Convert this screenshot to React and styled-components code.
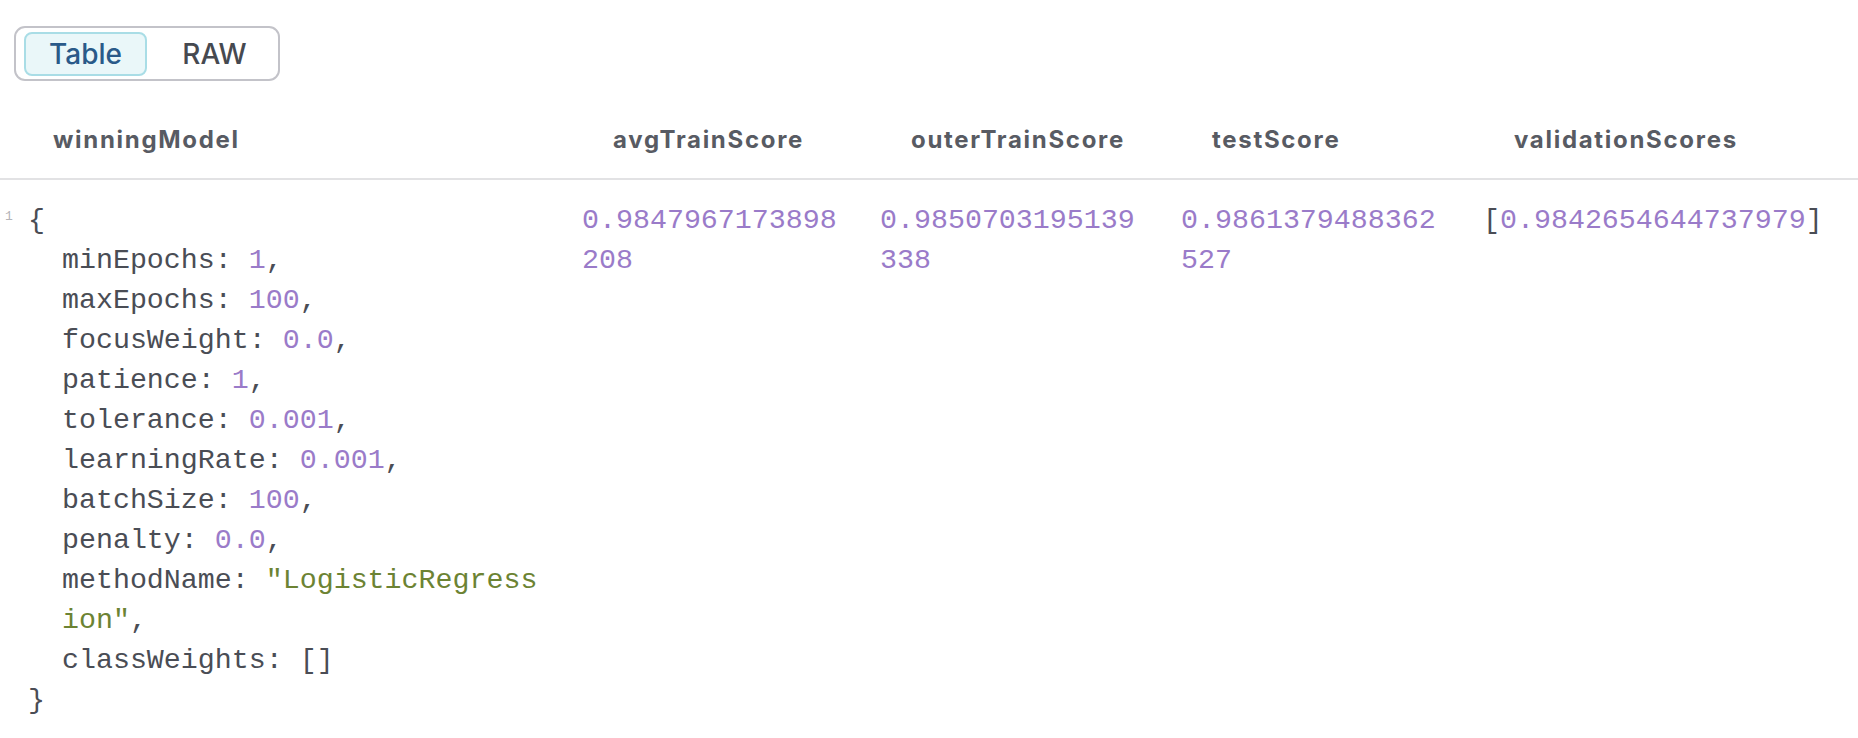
import React, { useState } from "react";
import styled, { createGlobalStyle, css } from "styled-components";

const COLOR = {
  text: "#4a4d55",
  header: "#585b63",
  number: "#9a7bc9",
  string: "#6c8333",
  gutter: "#b4b4b8",
  divider: "#e2e2e4",
};

const MONO = `"Liberation Mono", "DejaVu Sans Mono", monospace`;
const SANS = `Inter, "Noto Sans", Roboto, sans-serif`;

const GlobalStyle = createGlobalStyle`
  html, body {
    margin: 0;
    padding: 0;
    background: #ffffff;
  }
  body {
    font-family: ${SANS};
    color: ${COLOR.text};
  }
`;

const COLUMNS = [
  { key: "winningModel", title: "winningModel" },
  { key: "avgTrainScore", title: "avgTrainScore", value: "0.9847967173898208" },
  { key: "outerTrainScore", title: "outerTrainScore", value: "0.9850703195139338" },
  { key: "testScore", title: "testScore", value: "0.9861379488362527" },
  { key: "validationScores", title: "validationScores", list: ["0.9842654644737979"] },
];

const MODEL = [
  { key: "minEpochs", type: "number", value: "1" },
  { key: "maxEpochs", type: "number", value: "100" },
  { key: "focusWeight", type: "number", value: "0.0" },
  { key: "patience", type: "number", value: "1" },
  { key: "tolerance", type: "number", value: "0.001" },
  { key: "learningRate", type: "number", value: "0.001" },
  { key: "batchSize", type: "number", value: "100" },
  { key: "penalty", type: "number", value: "0.0" },
  { key: "methodName", type: "string", value: '"LogisticRegression"' },
  { key: "classWeights", type: "plain", value: "[]" },
];

export default function App() {
  const [view, setView] = useState("table");

  return (
    <Page>
      <GlobalStyle />
      <Toolbar>
        <Segmented>
          <SegmentButton $active={view === "table"} onClick={() => setView("table")}>
            Table
          </SegmentButton>
          <SegmentButton $active={view === "raw"} onClick={() => setView("raw")}>
            RAW
          </SegmentButton>
        </Segmented>
      </Toolbar>

      <Grid>
        <HeaderRow>
          {COLUMNS.map((col, i) => (
            <HeaderCell key={col.key} $first={i === 0}>
              {col.title}
            </HeaderCell>
          ))}
        </HeaderRow>

        <BodyRow>
          <CodeCell>
            <Gutter>1</Gutter>
            <Code>
              <Line>{"{"}</Line>
              {MODEL.map((item, i) => (
                <Line key={item.key} $indent>
                  {item.key}: <Token $type={item.type}>{item.value}</Token>
                  {i < MODEL.length - 1 ? "," : ""}
                </Line>
              ))}
              <Line>{"}"}</Line>
            </Code>
          </CodeCell>

          {COLUMNS.slice(1).map((col) => (
            <DataCell key={col.key}>
              {col.list ? (
                <>
                  [
                  {col.list.map((v) => (
                    <Token key={v} $type="number">
                      {v}
                    </Token>
                  ))}
                  ]
                </>
              ) : (
                <Token $type="number">{col.value}</Token>
              )}
            </DataCell>
          ))}
        </BodyRow>
      </Grid>
    </Page>
  );
}

const Page = styled.div`
  width: 100%;
  min-height: 738px;
`;

const Toolbar = styled.div`
  display: flex;
  padding: 26px 0 0 14px;
`;

const Segmented = styled.div`
  display: flex;
  gap: 6px;
  padding: 4px 2px 3px 8px;
  border: 2px solid #c3c3c9;
  border-radius: 11px;
`;

const SegmentButton = styled.button`
  width: 123px;
  height: 44px;
  display: flex;
  align-items: center;
  justify-content: center;
  font-family: ${SANS};
  font-size: 28px;
  font-weight: 500;
  color: #464950;
  background: transparent;
  border: 2px solid transparent;
  border-radius: 8px;
  cursor: pointer;
  padding: 0;
  ${({ $active }) =>
    $active &&
    css`
      color: #2a5a89;
      background: #eaf7f9;
      border-color: #a9dde6;
    `}
`;

const TEMPLATE = "566px 298px 301px 302px 1fr";

const Grid = styled.div`
  margin-top: 19px;
`;

const HeaderRow = styled.div`
  display: grid;
  grid-template-columns: ${TEMPLATE};
  height: 78px;
  border-bottom: 2px solid ${COLOR.divider};
`;

const HeaderCell = styled.div`
  display: flex;
  align-items: center;
  padding-left: ${({ $first }) => ($first ? "53px" : "47px")};
  font-family: ${SANS};
  font-size: 24px;
  font-weight: 700;
  letter-spacing: 1.7px;
  color: ${COLOR.header};
  white-space: nowrap;
`;

const BodyRow = styled.div`
  display: grid;
  grid-template-columns: ${TEMPLATE};
  padding-top: 20px;
  font-family: ${MONO};
  font-size: 28.3px;
  line-height: 40px;
  color: ${COLOR.text};
`;

const CodeCell = styled.div`
  display: flex;
  padding-right: 20px;
`;

const Gutter = styled.div`
  flex: 0 0 28px;
  box-sizing: border-box;
  padding-left: 5px;
  font-family: ${MONO};
  font-size: 13px;
  line-height: 34px;
  color: ${COLOR.gutter};
`;

const Code = styled.div`
  flex: 1;
  min-width: 0;
`;

const Line = styled.div`
  padding-left: ${({ $indent }) => ($indent ? "2ch" : "0")};
  word-break: break-all;
  white-space: pre-wrap;
`;

const Token = styled.span`
  color: ${({ $type }) =>
    $type === "number" ? COLOR.number : $type === "string" ? COLOR.string : COLOR.text};
`;

const DataCell = styled.div`
  padding: 0 16px;
  word-break: break-all;
  color: ${COLOR.text};
`;
